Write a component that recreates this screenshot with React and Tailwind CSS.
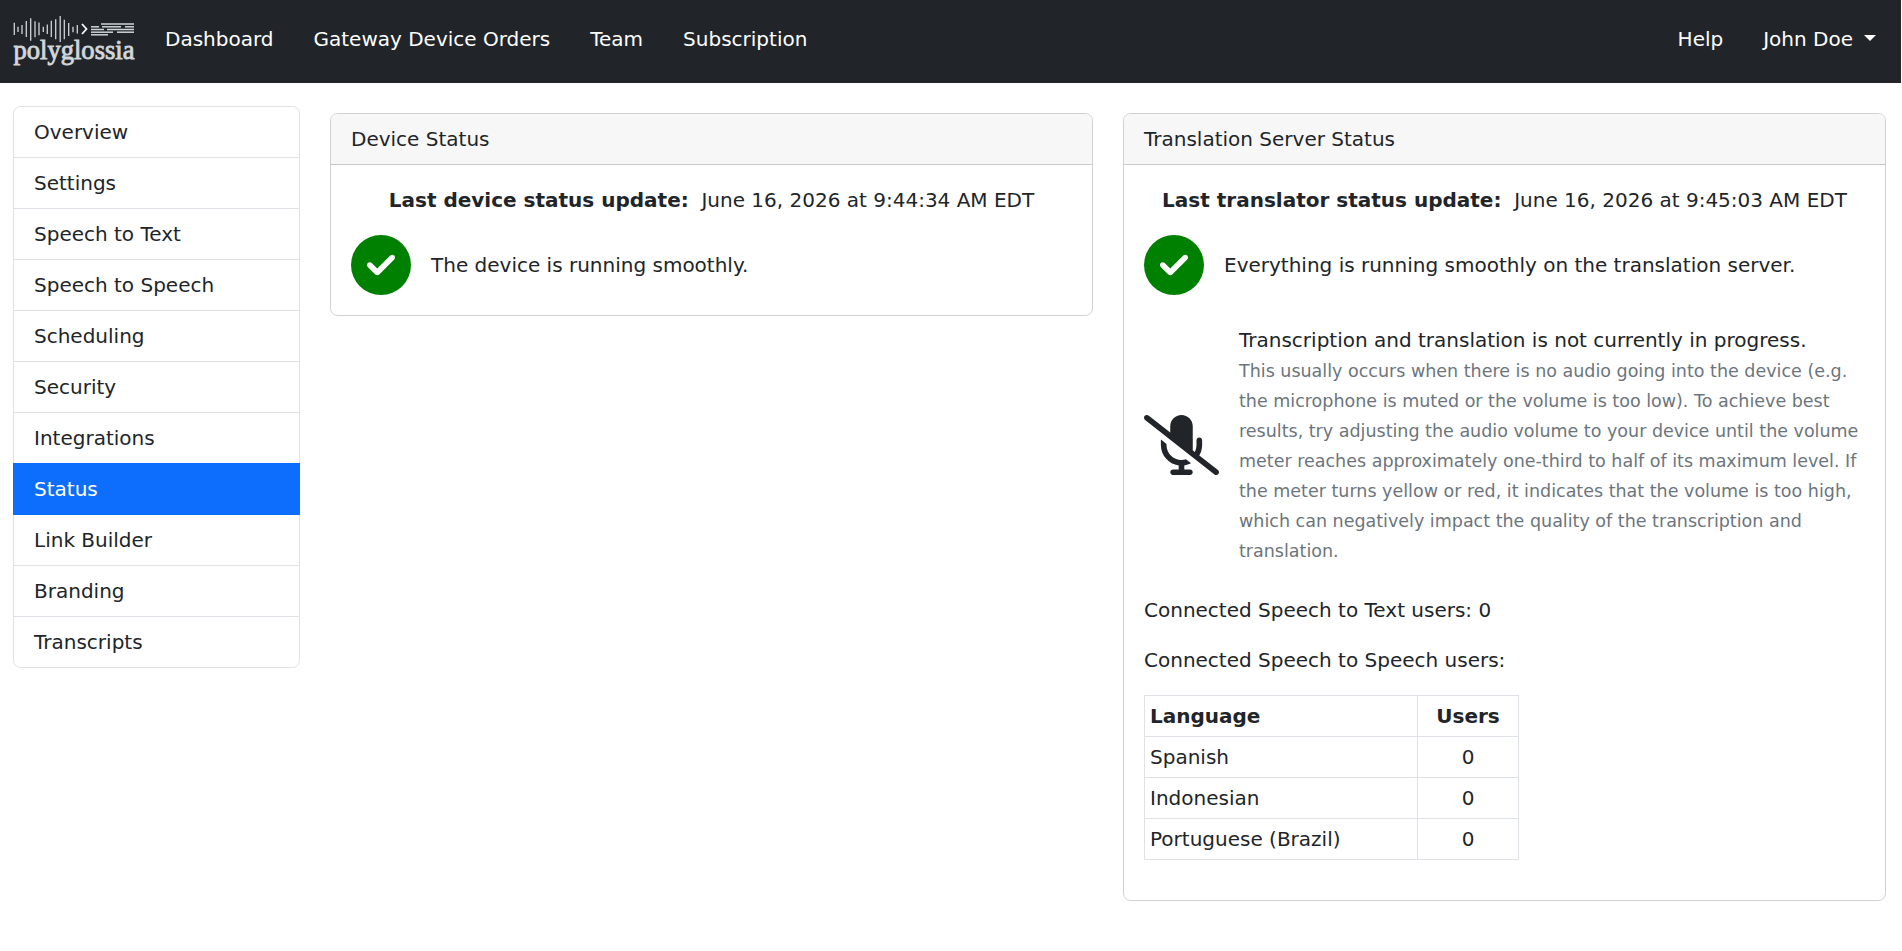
import React from 'react';
import { FaCircleCheck, FaMicrophoneSlash } from 'react-icons/fa6';

const navLinks = ['Dashboard', 'Gateway Device Orders', 'Team', 'Subscription'];

const menuItems = [
  'Overview',
  'Settings',
  'Speech to Text',
  'Speech to Speech',
  'Scheduling',
  'Security',
  'Integrations',
  'Status',
  'Link Builder',
  'Branding',
  'Transcripts',
];

const languages = [
  { name: 'Spanish', users: 0 },
  { name: 'Indonesian', users: 0 },
  { name: 'Portuguese (Brazil)', users: 0 },
];

// [x, top, bottom] of every bar in the wave form
const waveBars = [
  [1.3, 6.7, 19], [5, 10.7, 16], [9, 9, 18], [13.3, 5, 21], [17.7, 2.3, 24.7], [22, 5.3, 21.3],
  [26, 6.5, 19.3], [30.3, 10.7, 16], [34.3, 8.5, 18], [38.3, 4.7, 21], [42.7, 3.3, 23.3],
  [47.2, 0, 26], [51.3, 3.7, 23.3], [55.7, 7, 20], [60, 10.7, 16.3], [64.3, 9, 17.5],
];

const textDashes = [
  [88, 121, 8], [78, 86, 10.8], [89, 108, 10.8], [112, 121, 10.8], [78, 91, 13.5], [94, 121, 13.5],
  [78, 100, 16.2], [104, 121, 16.2], [78, 95, 18.8],
];

const Logo = () => (
  <svg className="h-[60px] w-[132px] overflow-visible" viewBox="0 0 132 60" fill="none" stroke="#ced4d8">
    {waveBars.map(([x, top, bottom]) => (
      <line key={x} x1={x} x2={x} y1={top} y2={bottom} strokeWidth="1.3" />
    ))}
    <path d="M69 8l4.5 5-4.5 5" stroke="#f8f9fa" strokeWidth="1.8" />
    {textDashes.map(([x1, x2, y]) => (
      <line key={`${x1}-${y}`} x1={x1} x2={x2} y1={y} y2={y} strokeWidth="1.5" />
    ))}
    <text
      x="0.5"
      y="43"
      textLength="121"
      lengthAdjust="spacingAndGlyphs"
      fill="#d5d9dc"
      strokeWidth="0.9"
      className="font-['Liberation_Serif',serif] text-[27px] leading-none"
    >
      polyglossia
    </text>
  </svg>
);

const Navbar = () => (
  <nav className="flex h-[83px] items-start bg-[#212529] pr-[5px] pl-[13px] text-white">
    <div className="mt-4 w-[132px]">
      <Logo />
    </div>
    <div className="mt-6 flex">
      {navLinks.map((link) => (
        <a key={link} href="#" className="px-5">
          {link}
        </a>
      ))}
    </div>
    <div className="mt-6 ml-auto flex">
      <a href="#" className="px-5">
        Help
      </a>
      <a href="#" className="flex items-center px-5">
        John Doe
        <span className="-mt-0.5 ml-[11px] border-x-6 border-t-6 border-x-transparent border-t-white" />
      </a>
    </div>
  </nav>
);

const Sidebar = () => (
  <ul className="w-[287px] rounded-[7.5px] border border-[#dee2e6]">
    {menuItems.map((item) => (
      <li
        key={item}
        className={
          item === 'Status'
            ? '-mx-px -mt-px border-b border-[#0d6efd] bg-[#0d6efd] px-[21px] pt-[11px] pb-2.5 text-white'
            : 'border-b border-[#dee2e6] px-5 py-2.5 last:border-b-0'
        }
      >
        {item}
      </li>
    ))}
  </ul>
);

const Card = ({ title, children }) => (
  <div className="w-[763px] overflow-hidden rounded-[7.5px] border border-[#d0d1d1]">
    <div className="border-b border-[#c8c9ca] bg-[#f7f7f7] px-5 py-2.5">{title}</div>
    <div className="p-5">{children}</div>
  </div>
);

const LastUpdate = ({ label, time }) => (
  <div className="mb-5 text-center">
    <strong className="font-bold">{label}</strong>&nbsp; {time}
  </div>
);

const HealthRow = ({ children }) => (
  <div className="flex items-center gap-5">
    <FaCircleCheck className="size-[60px] shrink-0 text-[#008000]" />
    <span>{children}</span>
  </div>
);

const UsersTable = () => (
  <table className="mb-5 w-[375px] border-collapse">
    <thead>
      <tr>
        <th className="w-[273px] border border-[#dee2e6] p-[5px] text-left font-bold">Language</th>
        <th className="border border-[#dee2e6] p-[5px] text-center font-bold">Users</th>
      </tr>
    </thead>
    <tbody>
      {languages.map(({ name, users }) => (
        <tr key={name}>
          <td className="border border-[#dee2e6] p-[5px]">{name}</td>
          <td className="border border-[#dee2e6] p-[5px] text-center">{users}</td>
        </tr>
      ))}
    </tbody>
  </table>
);

const App = () => (
  <div className="min-h-screen w-[1901px] bg-white font-['DejaVu_Sans',sans-serif] text-[20px] leading-[30px] text-[#212529]">
    <Navbar />
    <main className="flex items-start gap-[30px] pt-[23px] pl-[13px]">
      <Sidebar />
      <div className="mt-[7px] flex items-start gap-[30px]">
        <Card title="Device Status">
          <LastUpdate label="Last device status update:" time="June 16, 2026 at 9:44:34 AM EDT" />
          <HealthRow>The device is running smoothly.</HealthRow>
        </Card>
        <Card title="Translation Server Status">
          <LastUpdate label="Last translator status update:" time="June 16, 2026 at 9:45:03 AM EDT" />
          <HealthRow>Everything is running smoothly on the translation server.</HealthRow>
          <div className="my-[30px] flex items-center gap-5">
            <FaMicrophoneSlash className="h-[60px] w-[75px] shrink-0" />
            <div>
              Transcription and translation is not currently in progress.
              <br />
              <span className="text-[17.5px] leading-[26.25px] text-[#6c757d]">
                This usually occurs when there is no audio going into the device (e.g. the microphone is muted or the
                volume is too low). To achieve best results, try adjusting the audio volume to your device until the
                volume meter reaches approximately one-third to half of its maximum level. If the meter turns yellow or
                red, it indicates that the volume is too high, which can negatively impact the quality of the
                transcription and translation.
              </span>
            </div>
          </div>
          <p className="mb-5">Connected Speech to Text users: 0</p>
          <p className="mb-5">Connected Speech to Speech users:</p>
          <UsersTable />
        </Card>
      </div>
    </main>
  </div>
);

export default App;
